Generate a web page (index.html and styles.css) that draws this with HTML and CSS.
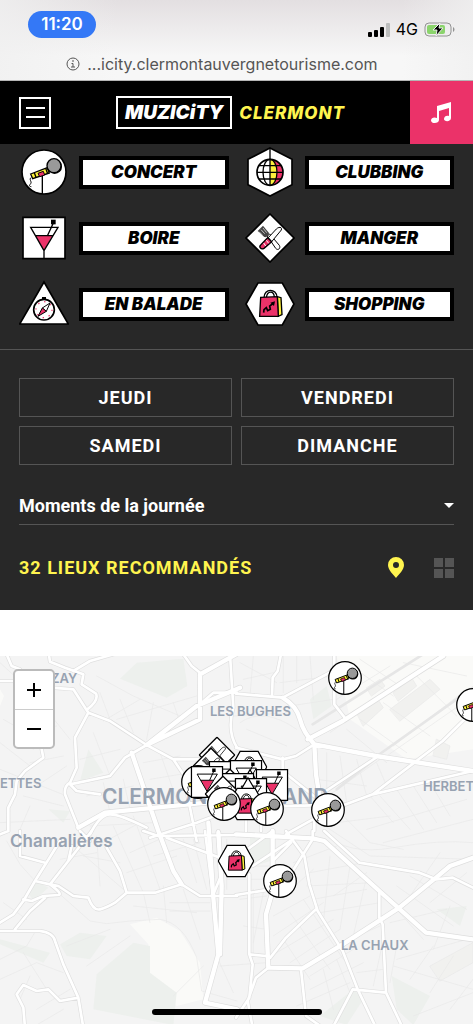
FILE: index.html
```html
<!DOCTYPE html>
<html lang="fr">
<head>
<meta charset="utf-8">
<meta name="viewport" content="width=device-width, initial-scale=1">
<title>Muzicity Clermont</title>
<link rel="stylesheet" href="styles.css">
</head>
<body>
<svg class="sprite" aria-hidden="true">
  <symbol id="concert" viewBox="0 0 150 150">
    <circle cx="75" cy="75" r="66" fill="#fff" stroke="#000" stroke-width="5"/>
    <path d="M70 85V140" stroke="#000" stroke-width="4"/>
    <path d="M37 91c-9 6 3 13-2 19s-5 8 2 9" fill="none" stroke="#000" stroke-width="3"/>
    <path d="M35 81 85 62 91 78 41 95Z" fill="#fdf03c" stroke="#000" stroke-width="4"/>
    <path d="M57 79 73 73 77 84 62 89Z" fill="#eb3269" stroke="#000" stroke-width="3"/>
    <path d="M46 77 51 91M80 64 86 80" stroke="#000" stroke-width="4"/>
    <circle cx="107" cy="59" r="22" fill="#000"/>
    <circle cx="105" cy="56" r="21" fill="#999" stroke="#000" stroke-width="4"/>
  </symbol>
  <symbol id="boire" viewBox="0 0 150 150">
    <path d="M12 13H138V137H12Z" fill="#fff" stroke="#000" stroke-width="5"/>
    <path d="M50 68H100L75 112Z" fill="#eb3269"/>
    <path d="M35 43H117L75 113ZM49 68H101M75 113V137M86 67 103 30" fill="none" stroke="#000" stroke-width="4"/>
    <path d="M96 20H110V34H96Z"/>
  </symbol>
  <symbol id="balade" viewBox="0 0 150 150">
    <path d="M75 9 148 135H2Z" fill="#fff" stroke="#000" stroke-width="5"/>
    <path d="M69 54H81V62H69Z"/>
    <circle cx="75" cy="92" r="31" fill="#fff" stroke="#000" stroke-width="5"/>
    <circle cx="75" cy="92" r="24" fill="none" stroke="#eb3269" stroke-width="4" stroke-dasharray="4 14.8"/>
    <path d="M93 72 82 97 70 87Z" fill="#fff" stroke="#000" stroke-width="3"/>
    <path d="M57 112 70 87 82 97Z" fill="#eb3269" stroke="#000" stroke-width="3"/>
  </symbol>
  <symbol id="clubbing" viewBox="0 0 150 150">
    <path d="M75 3 141 37V113L75 147 9 113V37Z" fill="#fff" stroke="#000" stroke-width="5"/>
    <circle cx="75" cy="76" r="39" fill="#fff"/>
    <path d="M75 37A39 39 0 0 1 75 115Z" fill="#eb3269"/>
    <path d="M75 37A22 39 0 0 1 75 115Z" fill="#fdf03c"/>
    <circle cx="75" cy="76" r="39" fill="none" stroke="#000" stroke-width="5"/>
    <ellipse cx="75" cy="76" rx="21" ry="39" fill="none" stroke="#000" stroke-width="4"/>
    <path d="M75 4V115M36 76H114M42 56H108M42 96H108" stroke="#000" stroke-width="4"/>
  </symbol>
  <symbol id="manger" viewBox="0 0 150 150">
    <path d="M75 3 147 75 75 147 3 75Z" fill="#fff" stroke="#000" stroke-width="5"/>
    <path d="M67 69 74 63 103 97C108 106 99 114 92 106Z" fill="#fff" stroke="#000" stroke-width="3"/>
    <path d="M38 54 54 38 72 60C72 68 65 74 58 72Z" fill="#444"/>
    <path d="M42 56 51 65M48 50 59 62M54 45 65 59" stroke="#fff" stroke-width="2"/>
    <path d="M70 74 94 48C101 41 112 41 109 51L80 86Z" fill="#fff" stroke="#000" stroke-width="3"/>
    <path d="M68 74 80 86 57 106C48 111 41 102 47 96Z" fill="#eb3269" stroke="#000" stroke-width="4"/>
    <path d="M56 90 62 99M64 82 71 91" stroke="#fff" stroke-width="3"/>
  </symbol>
  <symbol id="shopping" viewBox="0 0 150 150">
    <path d="M3 75 39 12H112L147 75 112 138H39Z" fill="#fff" stroke="#000" stroke-width="5"/>
    <path d="M57 56C57 27 95 27 96 55M64 56C67 34 87 34 88 55" fill="none" stroke="#000" stroke-width="4"/>
    <path d="M97 53 108 56 111 107 100 112Z" fill="#fdf03c" stroke="#000" stroke-width="4"/>
    <path d="M47 55 97 53 100 112H44Z" fill="#eb3269" stroke="#000" stroke-width="4"/>
    <path d="M56 101 57 92 64 86 68 95 76 91 74 81 86 72" fill="none" stroke="#000" stroke-width="5"/>
    <path d="M76 71 90 67 87 81Z"/>
  </symbol>
</svg>

<div class="browser">
  <div class="status">
    <span class="clock">11:20</span>
    <div class="signal">
      <svg width="22" height="14" viewBox="0 0 22 14" aria-hidden="true"><rect y="9" width="4" height="5" rx="1"/><rect x="6" y="7" width="4" height="7" rx="1"/><rect x="12" y="4" width="4" height="10" rx="1"/><rect x="18" width="4" height="14" rx="1" fill="#bcbdbd"/></svg>
      <span>4G</span>
      <svg width="31" height="15" viewBox="0 0 31 15" aria-hidden="true"><rect x="1" y="1" width="26" height="13" rx="4" fill="none" stroke="#929292"/><rect x="3" y="3" width="18" height="9" rx="2" fill="#8bd46c"/><path d="M29 5c2 1 2 4 0 5Z" fill="#929292"/><path d="M16 1 9 8h4l-1 6 7-8h-4Z" stroke="#f0f0f0" stroke-width="1"/></svg>
    </div>
  </div>
  <div class="address">
    <svg width="14" height="14" viewBox="0 0 14 14" fill="none" stroke="#555" aria-hidden="true"><circle cx="7" cy="7" r="6"/><path d="M7 3V5M5.5 6.5H7V10M5 10H9"/></svg>
    <span>...icity.clermontauvergnetourisme.com</span>
  </div>
</div>

<header class="topbar">
  <button class="menu" aria-label="Menu"><span></span><span></span></button>
  <a class="brand" href="#"><span class="brand-box">MUZICiTY</span><span class="brand-city">CLERMONT</span></a>
  <button class="music" aria-label="Musique">
    <svg width="22" height="22" viewBox="0 0 22 22" aria-hidden="true"><path d="M7 4 21 0V16C21 20 14 20 14 17 14 14 17 13 19 14V6L9 9V18C9 22 1 22 1 18.500 1 15 5 15 7 16Z" fill="#fff"/></svg>
  </button>
</header>

<main>
  <section class="filters">
    <nav class="categories">
      <a href="#"><svg><use href="#concert"/></svg><span>CONCERT</span></a>
      <a href="#"><svg><use href="#clubbing"/></svg><span>CLUBBING</span></a>
      <a href="#"><svg><use href="#boire"/></svg><span>BOIRE</span></a>
      <a href="#"><svg><use href="#manger"/></svg><span>MANGER</span></a>
      <a href="#"><svg><use href="#balade"/></svg><span>EN BALADE</span></a>
      <a href="#"><svg><use href="#shopping"/></svg><span>SHOPPING</span></a>
    </nav>
    <div class="options">
      <div class="days">
        <button>JEUDI</button><button>VENDREDI</button><button>SAMEDI</button><button>DIMANCHE</button>
      </div>
      <div class="moment">
        <select aria-label="Moments de la journée"><option>Moments de la journée</option></select>
        <svg width="10" height="5" viewBox="0 0 10 5" aria-hidden="true"><path d="M0 0H10L5 5Z" fill="#fff"/></svg>
      </div>
      <div class="results">
        <h2>32 LIEUX RECOMMANDÉS</h2>
        <button aria-label="Carte"><svg width="16" height="21" viewBox="0 0 16 21" aria-hidden="true"><path fill-rule="evenodd" d="M8 0a8 8 0 0 0-8 8c0 5 5 9 8 13 3-4 8-8 8-13a8 8 0 0 0-8-8Zm0 5a3 3 0 1 1 0 6 3 3 0 0 1 0-6Z" fill="#fff44f"/></svg></button>
        <button aria-label="Grille"><svg width="20" height="20" viewBox="0 0 20 20" aria-hidden="true"><path d="M0 0H9V9H0ZM11 0H20V9H11ZM0 11H9V20H0ZM11 11H20V20H11Z" fill="#555"/></svg></button>
      </div>
    </div>
  </section>

  <section class="map" aria-label="Carte des lieux">
    <svg class="tiles" viewBox="0 0 1419 1107" preserveAspectRatio="xMidYMid slice" aria-hidden="true">
      <defs>
        <g id="roads">
          <g transform="translate(0 -45)">
            <path d="M145 30 150 62 195 80 250 100 245 130 288 158Q297 178 262 205M155 140 220 145 265 215 330 240 440 312 520 355H610M265 215 225 290 230 380 210 425Q192 435 195 460L235 560M210 430 330 405 375 350 440 312M210 430 230 450 300 460M125 325 130 350 75 390 50 420 45 460 25 500V570M270 580Q300 520 330 520T440 560M520 355 550 400 590 600M450 590 590 545 711 500M550 40 575 75 600 95M600 190 640 155H711M690 40 700 200Q680 270 711 320M20 40 35 75 60 85M0 120H45M220 90 270 60 340 40M0 580 25 570"/>
          </g>
          <g transform="translate(708 -45)">
            <path d="M0 158 140 170M235 310 180 345 140 355 0 320M135 40 125 90 110 110 108 165M140 170 290 90M295 40V190L330 235M330 490 410 460 711 390M410 460 620 300 711 210M140 350V390L240 470M0 500 330 490M150 580 240 530 330 490M270 450 420 350M235 540V570M30 500V570M75 500V570"/>
          </g>
          <g transform="translate(0 525)">
            <path d="M60 0V75L135 95M180 30 105 150 70 210 40 250 0 275M105 150 150 160Q190 190 175 192L130 195 95 210 70 205M275 0 205 90 150 160 175 165 220 195 265 200Q280 240 300 235T345 215L380 185 465 185 545 160M320 50 360 120 380 185M475 0 520 120 545 160 600 195H711M430 0 475 15 711 12M500 20 660 80M135 200 90 240 45 295M0 300H120Q160 305 165 330L190 400 235 500 250 590M235 500 180 510 145 475 110 480 70 462 50 490 70 530 75 590M215 45 205 90M240 0 270 30M615 0 640 200M655 0 665 130 640 190"/>
          </g>
          <g transform="translate(708 525)">
            <path d="M230 0V25L170 120 105 175 0 192M150 0 205 75 220 160 245 240 320 360 365 475 420 590M50 105 170 25M240 235 150 320 103 380M40 130V370L50 400 40 500 0 560M40 370 90 375M97 410 60 440 35 510 50 590M195 415 210 555 260 590M290 590 350 475 450 485 500 590M450 485 440 280 430 260V180M265 0 370 95 550 125 600 145 650 140 711 170M0 80 110 0M110 90 165 35"/>
          </g>
        </g>
        <g id="avenues">
          <path d="M708 -5 600 55V190L440 267M440 267 590 150 720 95M395 290 475 525 520 645 545 685M235 515 315 470 620 440 738 420M848 125Q890 150 900 190T943 265L948 355 960 430M923 250 1028 195 1330 0M943 265 1128 300 1419 345M625 500 640 725 655 895 615 1040 711 1060M655 530 665 690 660 895M708 535 938 547 973 555 1138 705 1278 830 1419 850M818 525V705L798 775 805 935 908 937 1028 865 1198 755 1308 665 1350 630 1419 605"/>
        </g>
      </defs>
      <rect width="1419" height="1107" fill="#f4f4f4"/>
      <g fill="#fafaf8">
        <path d="M1010 0H1419V280L1220 310 1050 190ZM390 805 470 785 540 825 600 920 610 1030 530 1050 450 970 445 865ZM0 100 12 120 0 150Z"/>
      </g>
      <g fill="#edf0ed">
        <path d="M410 20 550 8 562 90 500 125 360 68ZM265 280 310 350 240 375ZM930 130 980 90 995 150 940 190ZM0 850 150 890 130 920 0 865ZM180 865 240 830 320 840 270 910 200 900ZM290 955 400 860 450 870 450 950 530 1010 520 1107 280 1060ZM1175 960 1290 1020 1240 1107 1190 1060ZM960 1080 1060 1000 1090 1030 1040 1107ZM80 705 110 675 145 695 100 735ZM750 545H810V615L750 635ZM1310 760 1400 750 1380 810ZM145 460 210 465 190 500Z"/>
      </g>
      <g class="blocks"><path d="M1070 170 1130 125 1150 155 1090 210ZM1170 160 1290 70 1320 100 1200 195ZM1180 110 1235 65 1250 90 1195 135ZM1100 95 1140 70 1155 90 1115 120ZM1310 250 1350 270 1340 310 1300 300ZM1290 930 1419 860 1419 920 1320 975Z"/></g>
      <g class="lanes">
        <path d="M0 20 60 75 130 80M10 190 80 230 100 280M80 60 130 150 210 250M60 230 170 210M90 320 190 300M110 390 200 330M0 260 90 330M290 60 400 120 540 180M300 110 330 190M310 195 420 130M360 130 400 230M460 140 440 250M520 140 540 200M350 190 590 120M280 230 330 360M240 310 360 280M430 320 540 300M450 370 570 350M480 290 540 460M0 340 200 420M70 420 190 450M260 420 400 390M310 380 330 470M370 370 390 460M0 500 210 490M90 450 60 520M270 510 460 500M290 570 420 500M250 600 360 620M290 540 300 690M340 510 430 710M400 480 480 700M390 590 500 540M380 650 530 600M220 570 370 700M180 610 290 590"/>
        <path d="M20 555 60 625 105 675M180 715 270 795 320 803 390 795 480 790Q550 800 590 905L605 1005 711 1035M10 740 80 790M60 800 150 720M110 820 80 870 0 910M70 890 140 1000M0 970 110 920 190 950M90 960 60 1030M110 1060 210 1000M110 1107 190 1060M200 870 330 820M260 930 390 840M400 750 590 770M430 710 450 800M490 690 500 800M550 700 600 850M510 740H630M510 765H630M460 600 600 560M550 550 590 680M580 550 620 700M680 550V700M680 630H810M680 670H810M520 1020 610 930M650 900 700 1010M660 930 800 920"/>
        <path d="M720 20 830 80M730 70 820 50M760 0 750 120M850 0V110M890 0V80M930 0 940 130M840 80 1000 60M870 150 1000 130M700 180 870 170M720 200Q790 150 890 220M740 220 860 270M1040 20 1180 120M1080 10 1200 90M1010 130 1170 30M990 230 1290 20M1040 220 1160 320M1080 190 1220 290M1150 140 1290 240M1250 60 1370 180M1210 20 1400 60M1160 300 1419 120M1180 270 1400 100M970 430 1140 310M980 290V410M1020 300 1040 440M1070 310 1100 420M1130 320 1160 390M950 370 1100 390M1000 450 1110 560 1210 580M1110 420 1180 500M1140 420 1230 520M1190 400 1270 520M1240 390 1310 500M1290 380 1350 480M1100 520 1400 430M1150 560 1419 490M1010 500 1170 480M960 500 1110 600 1419 610"/>
        <path d="M970 530Q1040 600 1180 575T1419 560M880 620 1010 570M930 650 1090 620M920 690 1120 680M940 730 1100 700M960 770 1140 740M990 600 970 800M1050 630 1020 820M1100 660 1060 840M1000 720 1100 650M840 730 940 640M820 780 930 720M820 840 970 740M830 890 1000 790M870 920 1020 820M870 770 990 940M910 730 1030 910M850 850 930 970M930 960 1060 880M930 1000 1090 920M970 940 1000 1060M1010 910 1050 1010M1190 760 1270 850M1170 800 1340 760M1190 690 1360 810M1230 660 1400 760M1230 720 1320 590M1290 740 1400 650M1350 750 1300 880M1190 910 1400 850M1180 930 1419 1000M1230 970 1300 870M1290 1010 1360 900M1350 1060 1419 970M1240 1080 1419 1010M1150 850 1120 990M1190 870 1170 980M1050 850 1140 810M1070 950 1150 940M760 700V900M790 710 760 860M720 730 800 720M730 810 800 820M890 1050 1050 980"/>
      </g>
      <path class="rail" d="M938 205 1419 -100M958 418 1110 315 1419 95M1010 400 1130 305"/>
      <use href="#roads" class="road-edge"/>
      <use href="#avenues" class="avenue-edge"/>
      <use href="#roads" class="road"/>
      <use href="#avenues" class="avenue"/>
    </svg>

    <span class="place" style="--x:51;--y:22">ZAY</span>
    <span class="place" style="--x:210;--y:55">LES BUGHES</span>
    <span class="place" style="--x:0;--y:127">ETTES</span>
    <span class="place" style="--x:423;--y:130">HERBET</span>
    <span class="place" style="--x:341;--y:289">LA CHAUX</span>
    <span class="place town" style="--x:10;--y:185">Chamalières</span>
    <span class="place city" style="--x:102;--y:140">CLERMONT-FERRAND</span>

    <button class="pin" aria-label="Manger" style="--x:217;--y:99"><svg><use href="#manger"/></svg></button>
    <button class="pin" aria-label="Shopping" style="--x:249;--y:111"><svg><use href="#shopping"/></svg></button>
    <button class="pin" aria-label="Manger" style="--x:211;--y:110"><svg><use href="#manger"/></svg></button>
    <button class="pin" aria-label="Concert" style="--x:198;--y:126"><svg><use href="#concert"/></svg></button>
    <button class="pin" aria-label="Boire" style="--x:225;--y:121"><svg><use href="#boire"/></svg></button>
    <button class="pin" aria-label="Boire" style="--x:246;--y:120"><svg><use href="#boire"/></svg></button>
    <button class="pin" aria-label="En balade" style="--x:250;--y:130"><svg><use href="#balade"/></svg></button>
    <button class="pin" aria-label="Manger" style="--x:230;--y:131"><svg><use href="#manger"/></svg></button>
    <button class="pin" aria-label="Boire" style="--x:238;--y:133"><svg><use href="#boire"/></svg></button>
    <button class="pin" aria-label="Boire" style="--x:207;--y:126"><svg><use href="#boire"/></svg></button>
    <button class="pin" aria-label="Boire" style="--x:272;--y:129"><svg><use href="#boire"/></svg></button>
    <button class="pin" aria-label="Boire" style="--x:251;--y:138"><svg><use href="#boire"/></svg></button>
    <button class="pin" aria-label="Manger" style="--x:223;--y:138"><svg><use href="#manger"/></svg></button>
    <button class="pin" aria-label="En balade" style="--x:248;--y:138"><svg><use href="#balade"/></svg></button>
    <button class="pin" aria-label="Shopping" style="--x:246;--y:148"><svg><use href="#shopping"/></svg></button>
    <button class="pin" aria-label="Concert" style="--x:224;--y:148"><svg><use href="#concert"/></svg></button>
    <button class="pin" aria-label="Concert" style="--x:267;--y:153"><svg><use href="#concert"/></svg></button>
    <button class="pin" aria-label="Concert" style="--x:328;--y:154"><svg><use href="#concert"/></svg></button>
    <button class="pin" aria-label="Concert" style="--x:345;--y:22"><svg><use href="#concert"/></svg></button>
    <button class="pin" aria-label="Concert" style="--x:473;--y:49"><svg><use href="#concert"/></svg></button>
    <button class="pin" aria-label="Shopping" style="--x:236;--y:205"><svg><use href="#shopping"/></svg></button>
    <button class="pin" aria-label="Concert" style="--x:280;--y:225"><svg><use href="#concert"/></svg></button>

    <div class="zoom">
      <button aria-label="Zoom avant"><svg width="16" height="16" viewBox="0 0 16 16" aria-hidden="true"><path d="M8 1V15M1 8H15"/></svg></button>
      <button aria-label="Zoom arrière"><svg width="16" height="16" viewBox="0 0 16 16" aria-hidden="true"><path d="M1 8H15"/></svg></button>
    </div>
    <div class="home-bar"></div>
  </section>
</main>
</body>
</html>
```
FILE: styles.css
```css
* { box-sizing: border-box; }

body {
  margin: 0;
  background: #fff;
  color: #fff;
  font-family: Roboto, "Liberation Sans", sans-serif;
}

button {
  margin: 0;
  padding: 0;
  border: 0;
  background: none;
  color: inherit;
  font: inherit;
  cursor: pointer;
}

a { color: inherit; text-decoration: none; }
svg { display: block; }
.sprite { position: absolute; width: 0; height: 0; }

/* Browser chrome */
.browser {
  height: 81px;
  padding-top: 11px;
  border-bottom: 1px solid #b5b5b5;
  background: linear-gradient(90deg, #f0f0f0cc, #e4e0e100 25%, #e4e0e100 85%, #f0f0f0cc), linear-gradient(#e3dfe1, #f7f7f7 70%);
  color: #000;
  font-family: Inter, sans-serif;
}

.status {
  display: flex;
  justify-content: space-between;
  padding: 0 18px 0 28px;
}

.clock {
  width: 68px;
  height: 27px;
  border-radius: 14px;
  background: #3478f6;
  color: #fff;
  font-size: 17px;
  font-weight: 600;
  line-height: 27px;
  text-align: center;
}

.signal {
  display: flex;
  align-items: center;
  gap: 6px;
  padding-top: 10px;
  font-size: 16px;
  line-height: 17px;
}

.address {
  display: flex;
  align-items: center;
  gap: 7px;
  margin-top: 16px;
  padding-left: 14%;
  color: #555;
  font-size: 16px;
  line-height: 20px;
}

/* Site header */
.topbar {
  display: flex;
  align-items: center;
  justify-content: space-between;
  height: 63px;
  padding-left: 19px;
  background: #000;
}

.menu {
  display: flex;
  flex-direction: column;
  align-items: center;
  justify-content: center;
  gap: 7px;
  width: 32px;
  height: 32px;
  border: 2px solid #fff;
}

.menu span { width: 19px; height: 2px; background: #fff; }

.brand {
  display: flex;
  align-items: center;
  gap: 7px;
  font-family: Inter, sans-serif;
  font-style: italic;
  font-weight: 900;
}

.brand-box {
  padding: 0 7px;
  border: 2px solid #fff;
  font-size: 19px;
  line-height: 29px;
}

.brand-city {
  color: #fff44f;
  font-size: 17px;
  font-weight: 800;
  letter-spacing: 1px;
}

.music {
  display: grid;
  place-items: center;
  width: 63px;
  height: 63px;
  background: #eb3269;
}

/* Filters */
.filters { background: #282828; }

.categories {
  display: grid;
  grid-template-columns: 1fr 1fr;
  gap: 16px;
  padding: 3px 19px 20px;
  border-bottom: 1px solid #555;
}

.categories a { display: flex; align-items: center; gap: 10px; }
.categories svg { flex: none; width: 50px; height: 50px; }

.categories span {
  flex: 1;
  border: 4px solid #000;
  background: #fff;
  color: #000;
  font-family: Inter, sans-serif;
  font-size: 17px;
  font-style: italic;
  font-weight: 900;
  line-height: 25px;
  text-align: center;
}

.options { padding: 28px 19px 29px; }

.days { display: grid; grid-template-columns: 1fr 1fr; gap: 9px; }

.days button {
  height: 39px;
  border: 1px solid #555;
  font-size: 18px;
  font-weight: 700;
  letter-spacing: 1px;
}

.moment {
  display: flex;
  align-items: center;
  margin-top: 22px;
  border-bottom: 1px solid #555;
}

.moment select {
  flex: 1;
  height: 37px;
  padding: 0;
  border: 0;
  appearance: none;
  background: none;
  color: #fff;
  font: bold 18px Roboto, sans-serif;
}

.results {
  display: flex;
  align-items: center;
  gap: 30px;
  margin-top: 29px;
}

.results h2 {
  flex: 1;
  margin: 0;
  color: #fff44f;
  font-size: 18px;
  font-weight: 700;
  letter-spacing: 1px;
  line-height: 27px;
}

/* Map */
.map {
  position: relative;
  margin-top: 46px;
  aspect-ratio: 473 / 369;
  overflow: hidden;
  background: #f4f4f4;
}

.tiles { width: 100%; height: 100%; }
.tiles path { stroke-linejoin: round; stroke-linecap: round; }
.blocks { fill: #f1f1ef; stroke: #e9e9e9; stroke-width: 2; }
.lanes { fill: none; stroke: #e8e8e8; stroke-width: 2; }
.rail { fill: none; stroke: #e6e6e6; stroke-width: 8; }
.road-edge, .road, .avenue-edge, .avenue { fill: none; }
.road-edge { stroke: #dfdfdf; stroke-width: 12; }
.road { stroke: #fff; stroke-width: 8; }
.avenue-edge { stroke: #dedede; stroke-width: 17; }
.avenue { stroke: #fff; stroke-width: 13; }

.place, .pin {
  position: absolute;
  left: calc(var(--x) / 473 * 100%);
  top: calc(var(--y) / 369 * 100%);
}

.place {
  transform: translateY(-50%);
  color: #97a2b1;
  font: 600 13px Inter, sans-serif;
  white-space: nowrap;
}

.town { font-size: 17px; }
.city { font-size: 21px; }

.pin { transform: translate(-50%, -50%); }
.pin svg { width: 37px; height: 37px; }

.zoom {
  position: absolute;
  top: 13px;
  left: 13px;
  border: 2px solid #bbb;
  border-radius: 5px;
  background: #fff;
}

.zoom button {
  display: grid;
  place-items: center;
  width: 38px;
  height: 38px;
}

.zoom button + button { border-top: 1px solid #ccc; }
.zoom path { stroke: #000; stroke-width: 2; }

.home-bar {
  position: absolute;
  bottom: 10px;
  left: 50%;
  width: 170px;
  height: 6px;
  border-radius: 3px;
  background: #000;
  transform: translateX(-50%);
}
```
